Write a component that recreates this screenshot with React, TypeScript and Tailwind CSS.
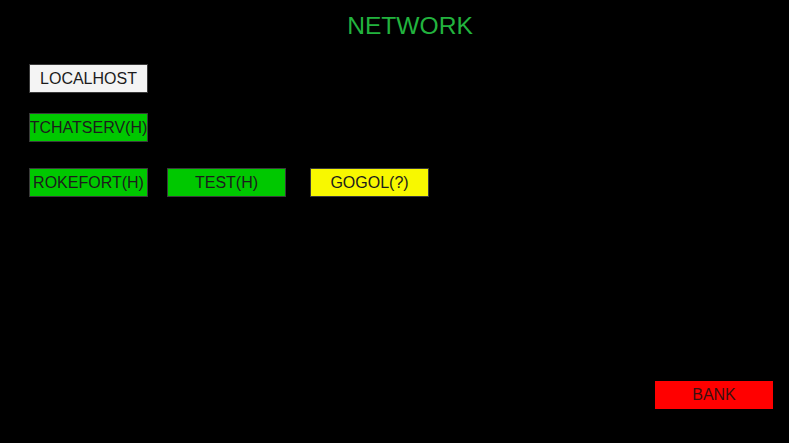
const font = { fontFamily: '"Liberation Sans", Arial, sans-serif' }

type NodeProps = {
  label: string
  color: string
}

function NodeButton({ label, color }: NodeProps) {
  return (
    <button
      className={`flex h-[29px] w-[119px] shrink-0 items-center justify-center overflow-hidden whitespace-nowrap border border-[#3a3a3a] text-[16px] leading-none text-[#1c1c1c] ${color}`}
    >
      {label}
    </button>
  )
}

export default function App() {
  return (
    <div className="flex h-[443px] w-[789px] flex-col overflow-hidden bg-black" style={font}>
      {/* Title */}
      <h1 className="pl-[31px] pt-[11px] text-center text-[24.6px] leading-[30px] text-[#22b33e]">NETWORK</h1>

      {/* Hosts */}
      <div className="mt-[23px] flex flex-col pl-[29px]">
        <NodeButton label="LOCALHOST" color="bg-[#f4f4f4]" />
        <div className="mt-[20px]">
          <NodeButton label="TCHATSERV(H)" color="bg-[#00c800]" />
        </div>
        <div className="mt-[26px] flex">
          <NodeButton label="ROKEFORT(H)" color="bg-[#00c800]" />
          <div className="ml-[19px]">
            <NodeButton label="TEST(H)" color="bg-[#00c800]" />
          </div>
          <div className="ml-[24px]">
            <NodeButton label="GOGOL(?)" color="bg-[#f8f800]" />
          </div>
        </div>
      </div>

      {/* Footer */}
      <div className="mt-auto flex justify-end pb-[34px] pr-[16px]">
        <button className="flex h-[28px] w-[118px] items-center justify-center bg-[#ff0000] text-[16px] leading-none text-[#3a1010]">
          BANK
        </button>
      </div>
    </div>
  )
}
